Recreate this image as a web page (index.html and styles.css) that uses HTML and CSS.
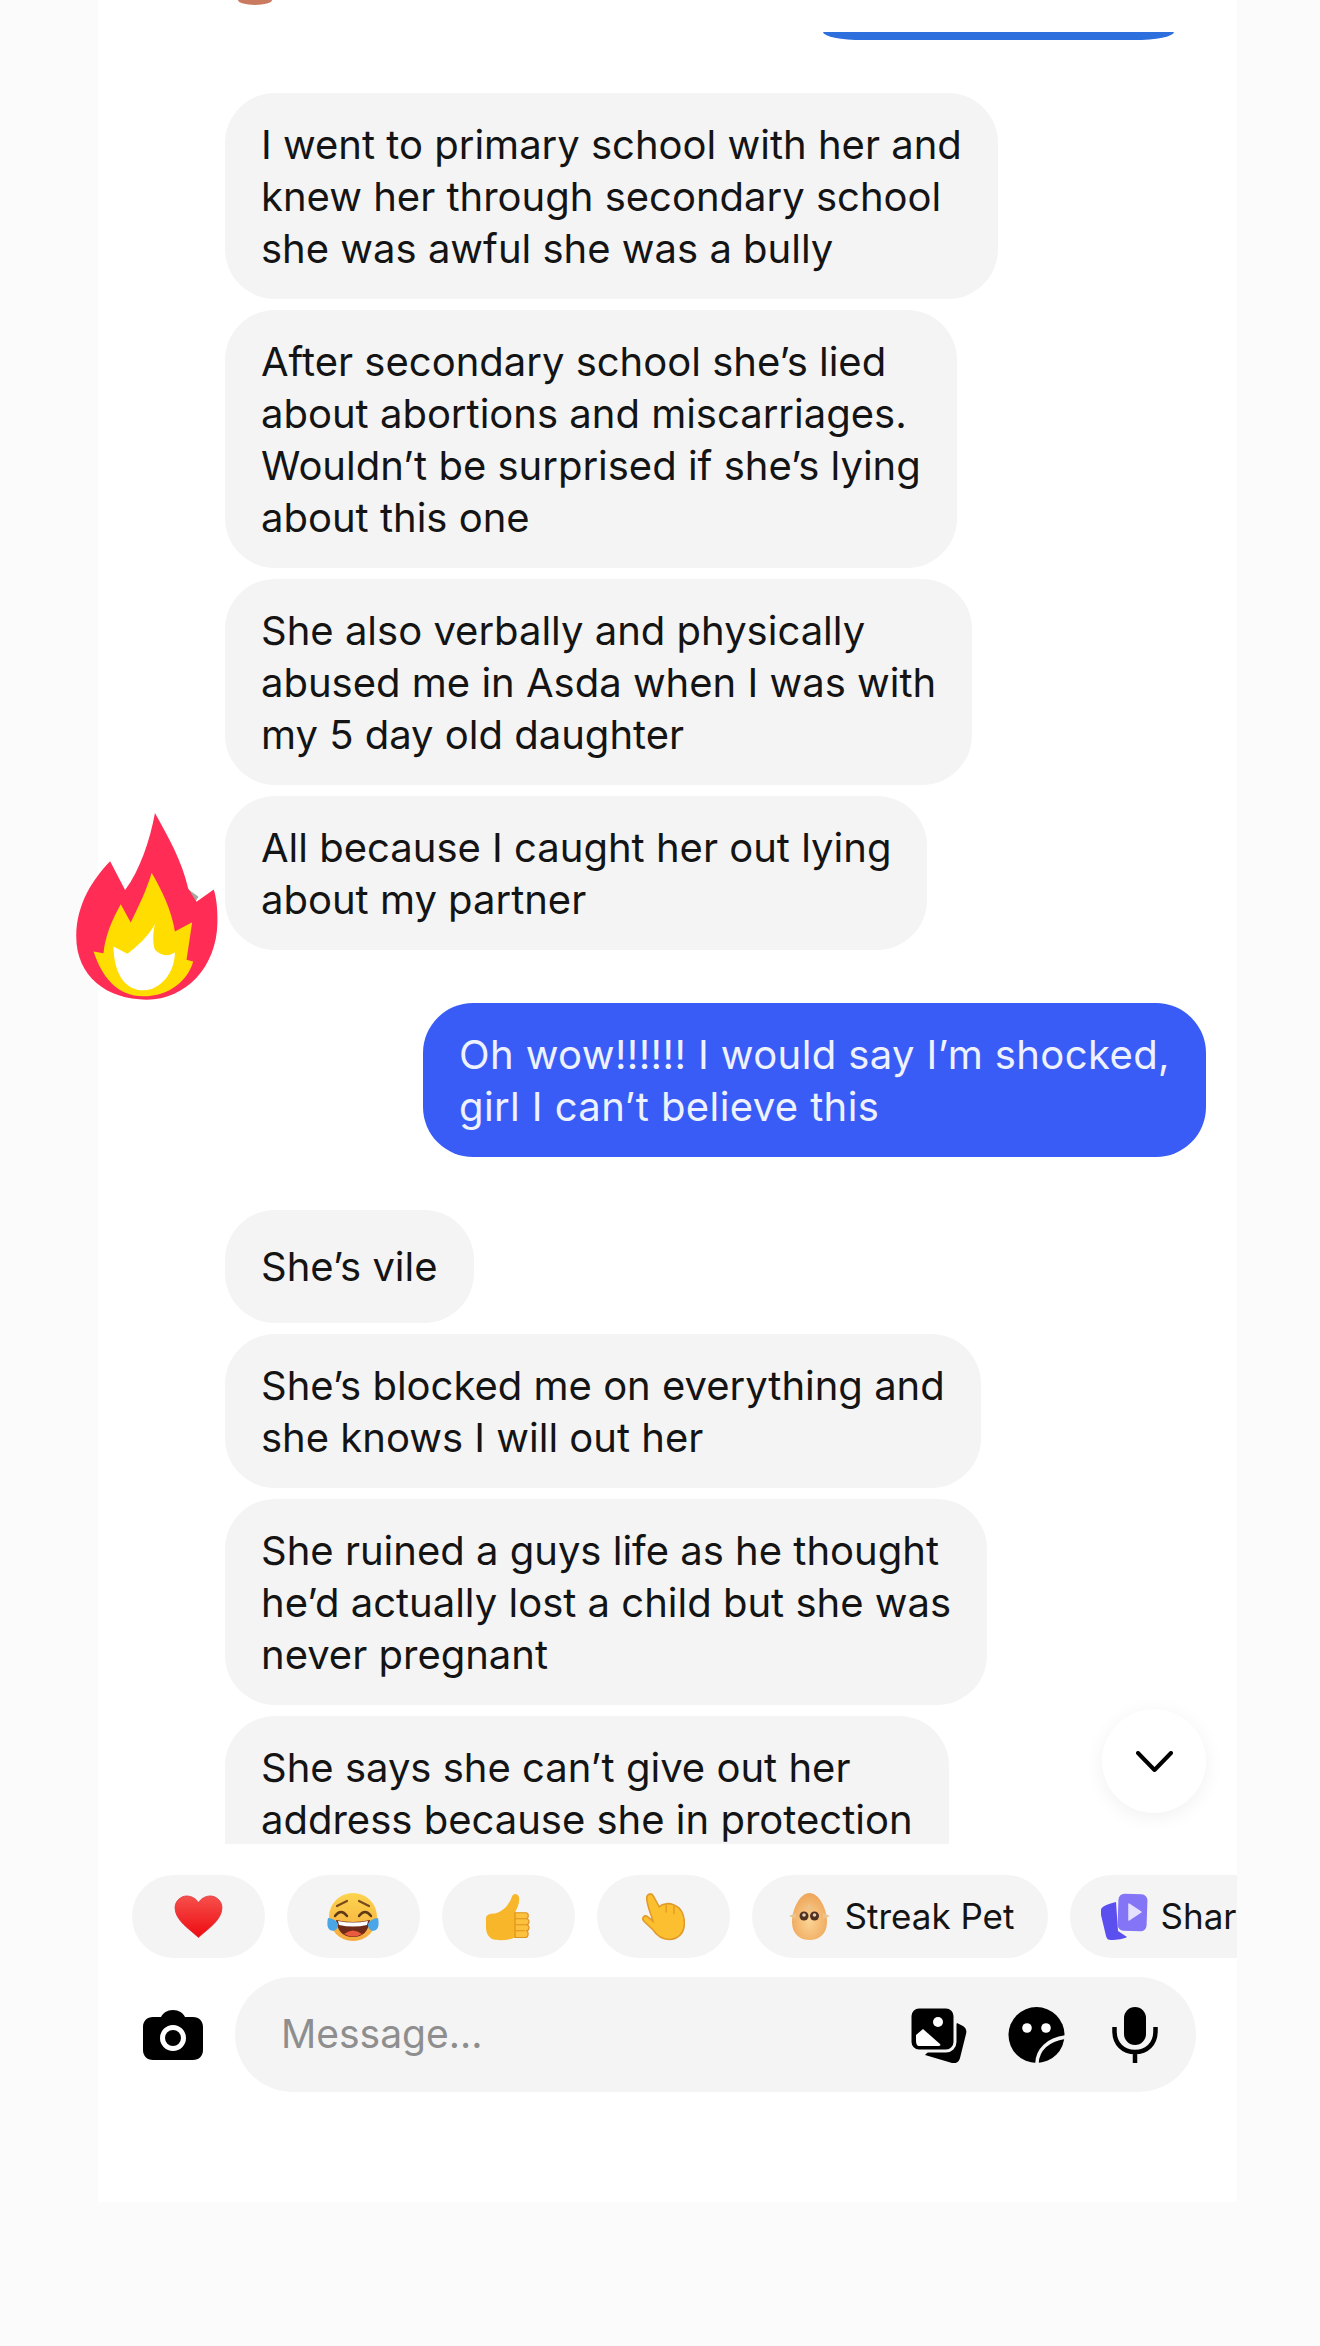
FILE: index.html
```html
<!DOCTYPE html>
<html lang="en">
<head>
  <meta charset="UTF-8" />
  <title>Chat</title>
  <link rel="stylesheet" href="styles.css">
</head>
<body>
  <main class="panel">
    <div class="top-row">
      <div class="avatar-edge"></div>
      <div class="sent-edge"></div>
    </div>

    <section class="thread">
      <div class="bubble">I went to primary school with her and<br>knew her through secondary school<br>she was awful she was a bully</div>
      <div class="bubble">After secondary school she’s lied<br>about abortions and miscarriages.<br>Wouldn’t be surprised if she’s lying<br>about this one</div>
      <div class="bubble">She also verbally and physically<br>abused me in Asda when I was with<br>my 5 day old daughter</div>
      <div class="bubble has-reaction">All because I caught her out lying<br>about my partner
        <svg class="fire" viewBox="108 98 426 563">
          <path fill="#a8a49c" d="M432 318L476 350L456 382Z"/>
          <path fill="#ff2d55" d="M345 98C385 170 425 240 445 325L470 365L522 328C532 360 534 400 533 430C530 560 440 660 320 660C200 660 108 590 108 470C108 370 160 295 210 243L255 330C300 270 330 180 345 98Z"/>
          <path fill="#ffdd00" d="M335 278C365 330 395 390 405 455L457 427L440 540L460 545C445 600 390 650 310 650C230 650 185 590 160 515L190 520C195 470 215 420 242 373L272 428C295 380 320 330 335 278Z"/>
          <path fill="#fff" d="M345 432C338 460 338 490 345 510Q372 538 405 518C405 580 360 632 310 632C260 632 222 590 220 500L262 522C290 500 325 470 345 432Z"/>
        </svg>
      </div>
      <div class="bubble sent">Oh wow!!!!!! I would say I’m shocked,<br>girl I can’t believe this</div>
      <div class="bubble after-sent">She’s vile</div>
      <div class="bubble">She’s blocked me on everything and<br>she knows I will out her</div>
      <div class="bubble">She ruined a guys life as he thought<br>he’d actually lost a child but she was<br>never pregnant</div>
      <div class="bubble runs-off">She says she can’t give out her<br>address because she in protection</div>
    </section>

    <button class="scroll-down">
      <svg viewBox="0 0 37 21" width="37" height="21"><path d="M2 2L18.500 19L35 2" fill="none" stroke="#000" stroke-width="4" stroke-linecap="round" stroke-linejoin="round"/></svg>
    </button>

    <div class="chips">
      <div class="chip emoji-chip">
        <svg viewBox="0 0 50 44" width="49" height="43">
          <defs><linearGradient id="heart" x1="0" y1="0" x2="0" y2="1"><stop offset="0" stop-color="#f6504c"/><stop offset="1" stop-color="#ee0a10"/></linearGradient></defs>
          <path fill="url(#heart)" stroke="#d8323a" stroke-width=".8" d="M25 43.500C16 35 1 26 1 13C1 6 7 1 13 1C18 1 23 4 25 8C27 4 32 1 37 1C43 1 49 6 49 13C49 26 34 35 25 43.500Z"/>
        </svg>
      </div>
      <div class="chip emoji-chip">
        <svg viewBox="0 0 52 48" width="52" height="48">
          <defs><linearGradient id="face" x1="0" y1="0" x2="0" y2="1"><stop offset="0" stop-color="#fcd54e"/><stop offset="1" stop-color="#f6a93e"/></linearGradient></defs>
          <ellipse cx="26" cy="24" rx="24" ry="24" fill="url(#face)"/>
          <path d="M10 13L20 8M42 13L32 8" fill="none" stroke="#7a4a1e" stroke-width="2.200" stroke-linecap="round"/>
          <path d="M8 23Q14 15 20 23M32 23Q38 15 44 23" fill="none" stroke="#5f3a17" stroke-width="2.400" stroke-linecap="round"/>
          <path d="M9 27Q26 31 43 27Q41 44 26 44Q11 44 9 27Z" fill="#6f2a18"/>
          <path d="M11 28Q26 31 41 28L40 32Q26 35 12 32Z" fill="#fff"/>
          <path d="M17 41Q26 34 35 41Q26 46 17 41Z" fill="#ea5a3e"/>
          <path d="M1 25C5 25 11 28 11 32C11 37 6 39 3 37C0 35 0 30 1 25ZM51 25C47 25 41 28 41 32C41 37 46 39 49 37C52 35 52 30 51 25Z" fill="#4aa6e6"/>
        </svg>
      </div>
      <div class="chip emoji-chip">
        <svg viewBox="0 0 46 56" width="46" height="48" preserveAspectRatio="none">
          <path fill="#f8b62b" d="M1 30C1 25 5 24 10 24C18 22 24 14 27 4C28 0 33 0 34 5C35 12 32 18 30 23L30 52C24 55 14 56 8 54C3 52 1 46 1 40Z"/>
          <path fill="#fcc13d" stroke="#e0921c" stroke-width="1.200" d="M30 23H41C44 23 44 30 41 30C45 30 45 37 41 37C45 37 45 44 41 44C44 44 44 52 40 52H30Z"/>
          <path fill="none" stroke="#e0921c" stroke-width="1.200" d="M30 30H41M30 37H41M30 44H40"/>
        </svg>
      </div>
      <div class="chip emoji-chip">
        <svg viewBox="60 33 140 152" width="44" height="49">
          <path fill="#fbbf2f" stroke="#e09a2a" stroke-width="5" d="M78 48C82 34 95 34 100 45L118 78C130 66 150 66 165 72C185 80 198 100 198 130C198 165 175 182 150 182C125 182 110 170 97 150L70 125C60 115 70 102 82 110L98 124C92 100 78 75 78 48Z"/>
          <path fill="none" stroke="#e6971f" stroke-width="4" stroke-linecap="round" d="M140 72V95M165 76V100"/>
        </svg>
      </div>
      <div class="chip label-chip">
        <svg viewBox="0 0 41 50" width="41" height="50" class="chip-icon">
          <defs><radialGradient id="egg" cx=".5" cy=".6" r=".7"><stop offset="0" stop-color="#fbd495"/><stop offset="1" stop-color="#ec9d4e"/></radialGradient></defs>
          <path fill="url(#egg)" d="M20.500 1C30 1 38 17 38 30C38 42 30 48 20.500 48C11 48 3 42 3 30C3 17 11 1 20.500 1Z"/>
          <path d="M0 24L7 21V27ZM41 24L34 21V27ZM20 11L18 17H23Z" fill="#e6c58e"/>
          <circle cx="15" cy="24" r="4.500" fill="#4f3122"/><circle cx="25.500" cy="24" r="4.500" fill="#4f3122"/>
          <circle cx="15" cy="23" r="1.800" fill="#e9cdb0"/><circle cx="25.500" cy="23" r="1.800" fill="#e9cdb0"/>
        </svg>
        <span class="chip-label">Streak Pet</span>
      </div>
      <div class="chip label-chip share-chip">
        <svg viewBox="0 0 48 48" width="48" height="48" class="chip-icon">
          <path fill="#5b4ff0" d="M1 17C1 14 5 12 16 9L18 38L27 44C24 46 17 47 11 47C8 47 7 46 6 43L1 22Z"/>
          <rect x="18" y="1" width="29" height="37" rx="6" fill="#8474f6" transform="rotate(2 32 20)"/>
          <path d="M29 11L41 19L29 27Z" fill="#e6e0ff" stroke="#e6e0ff" stroke-width="1.500" stroke-linejoin="round"/>
        </svg>
        <span class="chip-label">Share</span>
      </div>
    </div>

    <div class="composer">
      <svg class="camera" viewBox="0 0 60 50" width="60" height="50">
        <path fill="#000" d="M10 7H18C20 3 24 0 30 0C36 0 40 3 42 7H50C56 7 60 11 60 17V40C60 46 56 50 50 50H10C4 50 0 46 0 40V17C0 11 4 7 10 7Z"/>
        <circle cx="30" cy="28" r="10.500" fill="none" stroke="#fff" stroke-width="5"/>
      </svg>
      <div class="message-box">
        <span class="placeholder">Message...</span>
        <div class="box-icons">
          <svg viewBox="0 0 56 56" width="56" height="56">
            <path fill="#000" d="M46 16L52 19C55 21 56 24 55 27L49 51C48 55 45 57 41 56L14 48Z"/>
            <rect x="-1" y="0" width="45" height="44" rx="9" fill="#000" stroke="#f4f4f5" stroke-width="3"/>
            <circle cx="27" cy="15" r="5" fill="#fff"/>
            <path fill="#fff" d="M5 33V28L12 22L29 37C30 38 29 39 28 39H8C6 39 5 37 5 33Z"/>
          </svg>
          <svg viewBox="0 0 57 56" width="57" height="56">
            <circle cx="28.500" cy="28" r="28" fill="#000"/>
            <circle cx="19" cy="21" r="4.800" fill="#fff"/><circle cx="38" cy="21" r="4.800" fill="#fff"/>
            <path d="M29 57C29 43 40 32 58 30" fill="none" stroke="#f4f4f5" stroke-width="3.500"/>
          </svg>
          <svg class="mic-icon" viewBox="0 0 48 56" width="48" height="56">
            <rect x="13" y="0" width="22" height="38" rx="11" fill="#000"/>
            <path d="M3.500 20V24C3.500 37 12 45 24 45C36 45 44.500 37 44.500 24V20M24 45V56" fill="none" stroke="#000" stroke-width="4.500"/>
          </svg>
        </div>
      </div>
    </div>
  </main>
</body>
</html>
```

FILE: styles.css
```css
* {
  box-sizing: border-box;
  margin: 0;
  padding: 0;
}

html, body {
  height: 2346px;
  overflow: hidden;
}

body {
  background: #fbfbfb;
  padding-left: 98px;
  font-family: 'Inter', 'Liberation Sans', sans-serif;
  color: #141414;
}

.panel {
  position: relative;
  width: 1139px;
  height: 2202px;
  background: #fff;
}

.top-row {
  display: flex;
  justify-content: space-between;
  align-items: flex-start;
  height: 93px;
  padding: 0 63px 0 140px;
}

.avatar-edge {
  width: 34px;
  height: 5px;
  background: #c97a5f;
  border-radius: 0 0 50% 50% / 0 0 100% 100%;
}

.sent-edge {
  width: 351px;
  height: 8px;
  margin-top: 32px;
  background: #2c6fdd;
  border-radius: 0 0 40px 40px / 0 0 8px 8px;
}

/* pulled out to the left so the reaction is not clipped */
.thread {
  display: flex;
  flex-direction: column;
  align-items: flex-start;
  gap: 11px;
  width: 1169px;
  height: 1751px;
  margin-left: -30px;
  padding-left: 157px;
  overflow: hidden;
}

.bubble {
  flex: none;
  padding: 26px 36px 24px;
  background: #f4f4f5;
  border-radius: 50px;
  font-size: 40px;
  line-height: 52px;
  white-space: nowrap;
}

/* last bubble carries on below the fold */
.runs-off {
  padding-bottom: 100px;
}

.has-reaction {
  position: relative;
}

.fire {
  position: absolute;
  left: -149px;
  top: 17px;
  width: 142px;
  height: 187px;
}

.sent {
  align-self: flex-end;
  margin: 42px 31px 0 0;
  background: #3a5cf6;
  color: #eef2ff;
  letter-spacing: 0.4px;
}

.after-sent {
  margin-top: 42px;
  padding-top: 31px;
  padding-bottom: 30px;
}

.scroll-down {
  position: absolute;
  left: 1004px;
  top: 1709px;
  width: 104px;
  height: 104px;
  display: flex;
  align-items: center;
  justify-content: center;
  border: 0;
  border-radius: 50%;
  background: #fff;
  box-shadow: 0 4px 20px rgba(0, 0, 0, 0.06);
}

.chips {
  display: flex;
  gap: 22px;
  margin-top: 31px;
  padding-left: 33.500px;
  overflow: hidden;
}

.chip {
  display: flex;
  align-items: center;
  flex: none;
  height: 83px;
  background: #f4f4f5;
  border-radius: 42px;
  font-size: 35px;
  white-space: nowrap;
}

.chip-label {
  padding-bottom: 2px;
}

.emoji-chip {
  justify-content: center;
  width: 133px;
}

.label-chip {
  width: 296px;
  padding-left: 37px;
}

.share-chip {
  width: 240px;
  padding-left: 30px;
}

.share-chip .chip-icon {
  margin-right: 13px;
}

.chip-icon {
  flex: none;
  margin-right: 15px;
}

.composer {
  display: flex;
  align-items: center;
  gap: 32px;
  margin-top: 19px;
  padding-left: 45px;
}

.camera {
  flex: none;
}

.message-box {
  display: flex;
  align-items: center;
  justify-content: space-between;
  width: 961px;
  height: 115px;
  padding: 0 37px 0 46px;
  background: #f4f4f5;
  border-radius: 58px;
}

.placeholder {
  padding-bottom: 3px;
  color: #8e8e8e;
  font-size: 39px;
}

.box-icons {
  display: flex;
  align-items: center;
  gap: 41px;
}

.mic-icon {
  margin-left: 5px;
}
```
